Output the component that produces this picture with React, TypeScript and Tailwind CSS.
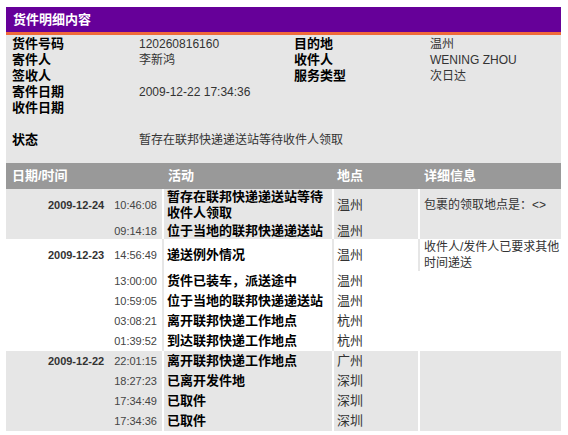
const FONT = { fontFamily: '"Liberation Sans", Arial, "Noto Sans CJK SC", sans-serif' }

const INFO = [
  ['货件号码', '120260816160', '目的地', '温州'],
  ['寄件人', '李新鸿', '收件人', 'WENING ZHOU'],
  ['签收人', '', '服务类型', '次日达'],
  ['寄件日期', '2009-12-22 17:34:36', '', ''],
  ['收件日期', '', '', ''],
  ['', '', '', ''],
  ['状态', '暂存在联邦快递递送站等待收件人领取', '', ''],
]

type Row = { date?: string; time: string; act: string; place: string; detail?: string; h: string; line?: boolean }

const GROUPS: { gray: boolean; rows: Row[] }[] = [
  {
    gray: true,
    rows: [
      { date: '2009-12-24', time: '10:46:08', act: '暂存在联邦快递递送站等待收件人领取', place: '温州', detail: '包裹的领取地点是：<>', h: 'h-[32px]', line: true },
      { time: '09:14:18', act: '位于当地的联邦快递递送站', place: '温州', h: 'h-[18px]', line: true },
    ],
  },
  {
    gray: false,
    rows: [
      { date: '2009-12-23', time: '14:56:49', act: '递送例外情况', place: '温州', detail: '收件人/发件人已要求其他时间递送', h: 'h-[32px]', line: true },
      { time: '13:00:00', act: '货件已装车，派送途中', place: '温州', h: 'h-[20px]' },
      { time: '10:59:05', act: '位于当地的联邦快递递送站', place: '温州', h: 'h-[20px]' },
      { time: '03:08:21', act: '离开联邦快递工作地点', place: '杭州', h: 'h-[20px]' },
      { time: '01:39:52', act: '到达联邦快递工作地点', place: '杭州', h: 'h-[20px]' },
    ],
  },
  {
    gray: true,
    rows: [
      { date: '2009-12-22', time: '22:01:15', act: '离开联邦快递工作地点', place: '广州', h: 'h-[20px]', line: true },
      { time: '18:27:23', act: '已离开发件地', place: '深圳', h: 'h-[20px]', line: true },
      { time: '17:34:49', act: '已取件', place: '深圳', h: 'h-[20px]', line: true },
      { time: '17:34:36', act: '已取件', place: '深圳', h: 'h-[20px]', line: true },
    ],
  },
]

const COLS = 'grid grid-cols-[156px_170px_86px_143px]'

export default function App() {
  return (
    <div className="min-h-screen bg-white" style={FONT}>
      <div className="ml-[6px] pt-[7px] w-[555px]">
        <div className="h-[25px] bg-[#660099] pl-[7px] flex items-center text-[13px] font-bold text-white">货件明细内容</div>
        <div className="h-[3px] bg-[#f06a3a]" />

        <div className="bg-[#e6e6e6] pt-[1px] pb-[15px] pl-[6px]">
          {INFO.map((r, i) => (
            <div key={i} className="grid grid-cols-[127px_155px_136px_1fr] h-[16px] items-center leading-[16px]">
              <div className="text-[13px] font-bold text-black">{r[0]}</div>
              {r[2] || r[3] ? (
                <>
                  <div className="text-[12px] text-[#333]">{r[1]}</div>
                  <div className="text-[13px] font-bold text-black">{r[2]}</div>
                  <div className="text-[12px] text-[#333]">{r[3]}</div>
                </>
              ) : (
                <div className="col-span-3 whitespace-nowrap text-[12px] text-[#333]">{r[1]}</div>
              )}
            </div>
          ))}
        </div>

        <div className={`${COLS} h-[26px] bg-[#999999] items-center text-[13px] font-bold text-white`}>
          <div className="pl-[6px]">日期/时间</div>
          <div className="pl-[6px]">活动</div>
          <div className="pl-[5px]">地点</div>
          <div className="pl-[6px]">详细信息</div>
        </div>

        {GROUPS.map((g, gi) => (
          <div key={gi} className={g.gray ? 'bg-[#e6e6e6]' : 'bg-white'}>
            {g.rows.map((r, ri) => {
              const sep = g.gray ? 'border-white' : 'border-[#e6e6e6]'
              return (
                <div key={ri} className={`${COLS} ${r.h}`}>
                  <div className="flex items-center justify-end pr-[5px] gap-[10px]">
                    <span className="text-[11px] font-bold text-[#333]">{r.date}</span>
                    <span className="text-[11px] text-[#444]">{r.time}</span>
                  </div>
                  <div className={`border-l-2 ${sep} pl-[3px] pr-[4px] flex items-center text-[13px] font-bold text-black leading-[16px]`}>{r.act}</div>
                  <div className={`border-l-2 ${sep} pl-[3px] flex items-center text-[13px] text-[#333]`}>{r.place}</div>
                  <div className={`border-l-2 ${r.line ? sep : 'border-transparent'} pl-[4px] flex items-center text-[12px] text-[#333] leading-[16px]`}>{r.detail}</div>
                </div>
              )
            })}
          </div>
        ))}
      </div>
    </div>
  )
}
